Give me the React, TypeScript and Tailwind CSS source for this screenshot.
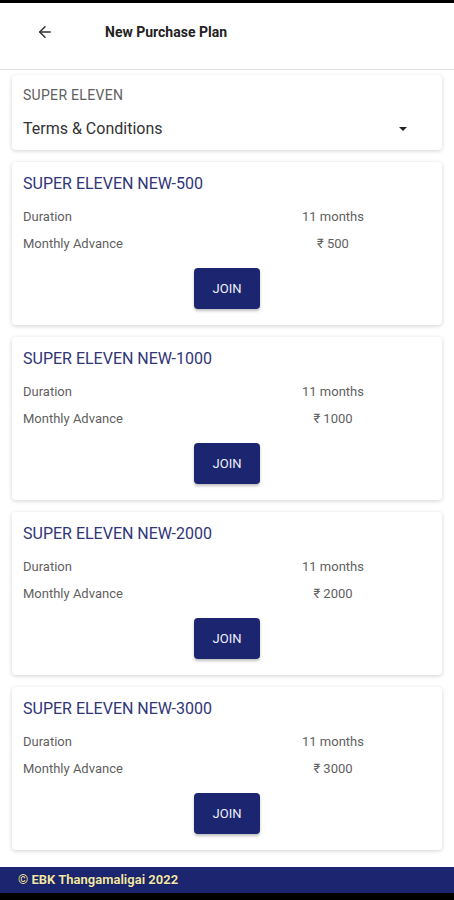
import { ArrowLeft } from 'lucide-react'

const plans = [
  { name: 'SUPER ELEVEN NEW-500', duration: '11 months', advance: '₹ 500' },
  { name: 'SUPER ELEVEN NEW-1000', duration: '11 months', advance: '₹ 1000' },
  { name: 'SUPER ELEVEN NEW-2000', duration: '11 months', advance: '₹ 2000' },
  { name: 'SUPER ELEVEN NEW-3000', duration: '11 months', advance: '₹ 3000' },
]

function PlanCard({ plan }: { plan: (typeof plans)[number] }) {
  return (
    <div className="rounded-[4px] bg-white px-[11px] pt-3 pb-4 shadow-[0_1px_4px_rgba(0,0,0,0.18)]">
      <h2 className="h-5 text-[16px] leading-5 text-[#2f3577]">{plan.name}</h2>

      <div className="mt-[9px] text-[13px] text-[#5f5f5f]">
        <div className="grid h-[27px] grid-cols-2 items-center">
          <span>Duration</span>
          <span className="pl-[8px] text-center">{plan.duration}</span>
        </div>
        <div className="grid h-[27px] grid-cols-2 items-center">
          <span>Monthly Advance</span>
          <span className="pl-[8px] text-center">{plan.advance}</span>
        </div>
      </div>

      <div className="mt-[11px] flex justify-center">
        <button
          type="button"
          className="h-[41px] w-[66px] rounded-[4px] bg-[#1b2570] text-[13px] text-[#eef0f6] shadow-[0_2px_3px_rgba(0,0,0,0.25)]"
        >
          JOIN
        </button>
      </div>
    </div>
  )
}

export default function App() {
  return (
    <div className="flex min-h-[900px] flex-col bg-white font-['Roboto',sans-serif]">
      <div className="h-[3px] bg-black" />

      <header className="flex h-[67px] items-center border-b border-[#e2e2e2] bg-white pb-[8px]">
        <ArrowLeft className="ml-[36px] h-[18px] w-[18px] text-[#333]" strokeWidth={2} />
        <h1 className="ml-[51px] text-[14px] font-bold text-[#222]">
          New Purchase Plan
        </h1>
      </header>

      <main className="flex flex-1 flex-col gap-3 px-3 pt-[5px]">
        <div className="rounded-[4px] bg-white px-[11px] pt-3 pb-[9px] shadow-[0_1px_4px_rgba(0,0,0,0.18)]">
          <p className="text-[14px] leading-4 tracking-[0.3px] text-[#606060]">SUPER ELEVEN</p>
          <div className="mt-[14px] flex h-6 items-center justify-between pr-[24px]">
            <span className="text-[16px] text-[#333]">Terms &amp; Conditions</span>
            <span className="h-0 w-0 border-x-[4px] border-t-[4px] border-x-transparent border-t-[#222]" />
          </div>
        </div>

        {plans.map((plan) => (
          <PlanCard key={plan.name} plan={plan} />
        ))}
      </main>

      <footer className="mt-[17px] flex h-[26px] items-center bg-[#1b2570] pl-[18px]">
        <span className="text-[13px] font-bold text-[#efe6b6] [text-shadow:0_0_1px_#000]">
          © EBK Thangamaligai 2022
        </span>
      </footer>
      <div className="h-[7px] bg-black" />
    </div>
  )
}
